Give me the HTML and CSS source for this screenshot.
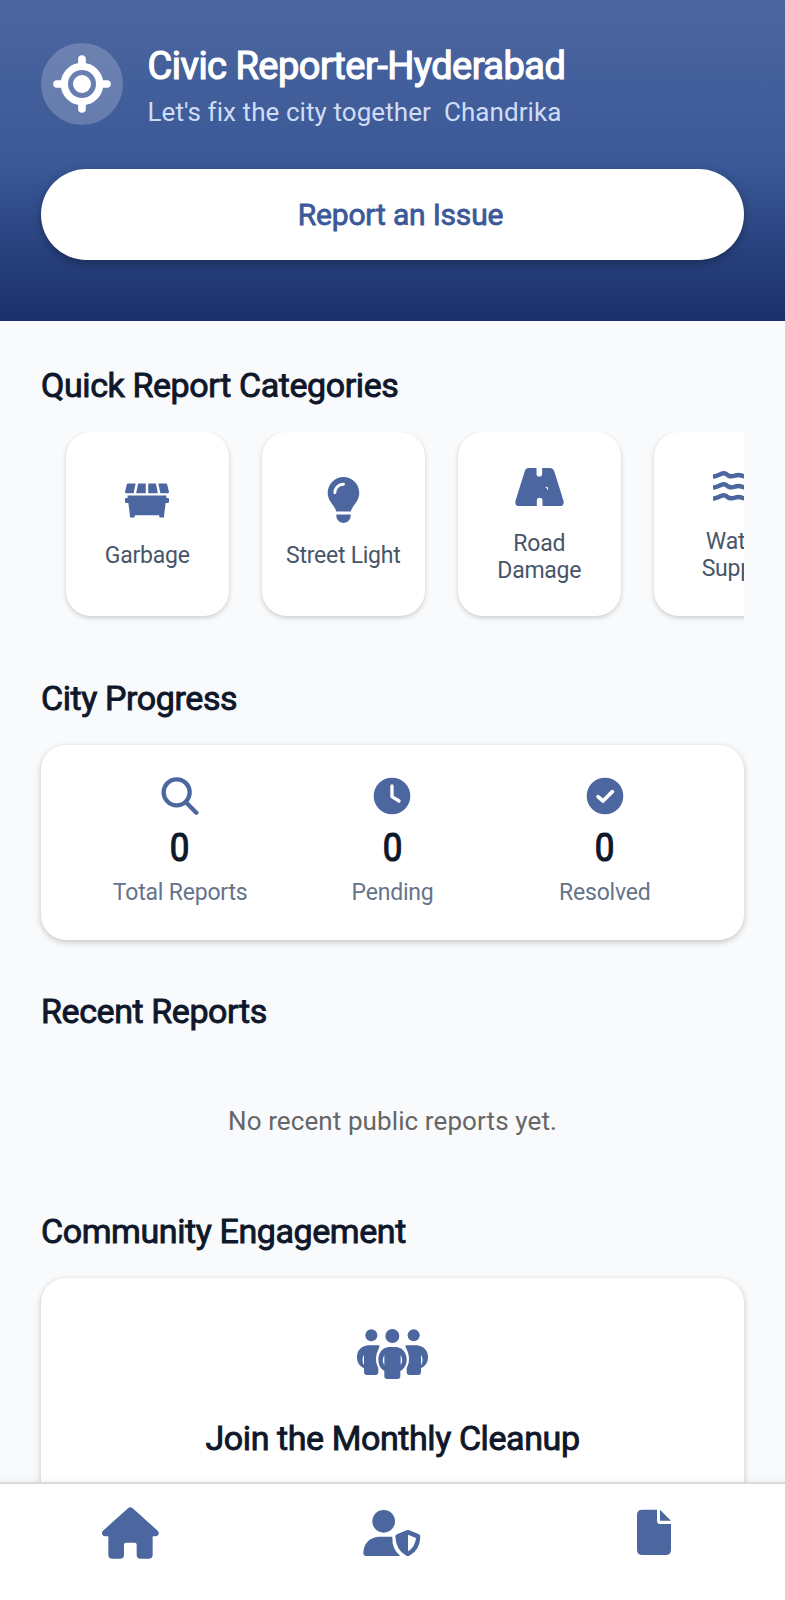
FILE: index.html
```html
<!DOCTYPE html>
<html lang="en">
<head>
<meta charset="utf-8">
<title>Civic Reporter</title>
<link rel="stylesheet" href="styles.css">
</head>
<body>
<div class="app">
  <header class="hero">
    <div class="brand">
      <div class="badge">
        <svg width="58" height="58" viewBox="0 0 174 174" fill="none" stroke="#fff">
          <circle cx="87" cy="87" r="53" stroke-width="22"/>
          <circle cx="87" cy="87" r="27" fill="#fff" stroke="none"/>
          <path d="M87 12v20M87 142v20M12 87h20M142 87h20" stroke-width="23" stroke-linecap="round"/>
        </svg>
      </div>
      <div>
        <h1 class="brand-title">Civic Reporter-Hyderabad</h1>
        <p class="brand-sub">Let's fix the city together&nbsp; Chandrika</p>
      </div>
    </div>
    <button class="cta">Report an Issue</button>
  </header>

  <main class="content">
    <h2 class="heading">Quick Report Categories</h2>
    <div class="categories">
      <div class="category">
        <div class="category-icon">
          <svg width="44" height="35" viewBox="0 32 576 448" fill="currentColor"><path d="M560 160c10.400 0 18-9.800 15.500-19.900l-24-96C549.700 37 543.300 32 536 32h-98.900l25.600 128H560zM272 32H171.500l-25.600 128H272V32zm132.500 0H304v128h126.100L404.500 32zM16 160h97.300l25.600-128H40c-7.300 0-13.700 5-15.500 12.100l-24 96C-2 150.200 5.600 160 16 160zm544 64h-20l4-32H32l4 32H16c-8.800 0-16 7.200-16 16v32c0 8.800 7.200 16 16 16h28l20 160v16c0 8.800 7.200 16 16 16h32c8.800 0 16-7.200 16-16v-16h320v16c0 8.800 7.200 16 16 16h32c8.800 0 16-7.200 16-16v-16l20-160h28c8.800 0 16-7.200 16-16v-32c0-8.800-7.200-16-16-16z"/></svg>
        </div>
        <span class="category-label">Garbage</span>
      </div>
      <div class="category">
        <div class="category-icon">
          <svg width="35" height="46" viewBox="0 0 384 512" fill="currentColor"><path d="M272 384c9.600-31.900 29.500-59.100 49.200-86.200 5.200-7.100 10.400-14.200 15.400-21.400 19.800-28.500 31.400-63 31.400-100.300C368 78.800 289.200 0 192 0S16 78.800 16 176c0 37.300 11.600 71.900 31.400 100.300 5 7.200 10.200 14.300 15.400 21.400 19.800 27.100 39.700 54.400 49.200 86.200H272zM192 512c44.200 0 80-35.800 80-80V416H112v16c0 44.200 35.800 80 80 80zM112 176c0 8.800-7.200 16-16 16s-16-7.200-16-16c0-61.900 50.100-112 112-112 8.800 0 16 7.200 16 16s-7.200 16-16 16c-44.200 0-80 35.800-80 80z"/></svg>
        </div>
        <span class="category-label">Street Light</span>
      </div>
      <div class="category category-road">
        <div class="category-icon">
          <svg width="49" height="38" viewBox="0 0 146 114"><path fill="currentColor" d="M40 0H64V17a8.500 8.500 0 0 0 17 0V0H104q9 0 13 9L145 98q3 16-11 16H82V98a8.500 8.500 0 0 0-17 0v16H12Q-2 114 1 98L29 9q3-9 11-9z"/><path fill="#fff" d="M90 57q9-3 9 6l-2 4q-1-7-7-10z"/></svg>
        </div>
        <span class="category-label">Road Damage</span>
      </div>
      <div class="category">
        <div class="category-icon">
          <svg width="44" height="31" viewBox="0 0 132 93" fill="none" stroke="currentColor" stroke-width="13.500" stroke-linejoin="round"><path d="M0 17q12-2 24-8t22 5q9 4 20 0t20 0q11 4 20 0t26 4M0 50q12-2 24-8t22 5q9 4 20 0t20 0q11 4 20 0t26 4M0 83q12-2 24-8t22 5q9 4 20 0t20 0q11 4 20 0t26 4"/></svg>
        </div>
        <span class="category-label">Water Supply</span>
      </div>
    </div>

    <h2 class="heading">City Progress</h2>
    <div class="card stats">
      <div class="stat">
        <svg width="38" height="38" viewBox="0 0 114 114" fill="none" stroke="currentColor" stroke-linecap="round"><circle cx="47" cy="46" r="39" stroke-width="13"/><path d="M77 78l29 29" stroke-width="13"/></svg>
        <strong class="stat-value">0</strong>
        <span class="stat-label">Total Reports</span>
      </div>
      <div class="stat">
        <svg width="38" height="38" viewBox="0 0 114 114" fill="none"><circle cx="57" cy="57" r="55" fill="currentColor"/><path d="M57 27v32l21 13" stroke="#fff" stroke-width="10" stroke-linecap="round" stroke-linejoin="round"/></svg>
        <strong class="stat-value">0</strong>
        <span class="stat-label">Pending</span>
      </div>
      <div class="stat">
        <svg width="38" height="38" viewBox="0 0 114 114" fill="none"><circle cx="57" cy="57" r="55" fill="currentColor"/><path d="M36 59l15 13 28-28" stroke="#fff" stroke-width="11" stroke-linecap="round" stroke-linejoin="round"/></svg>
        <strong class="stat-value">0</strong>
        <span class="stat-label">Resolved</span>
      </div>
    </div>

    <h2 class="heading">Recent Reports</h2>
    <p class="empty">No recent public reports yet.</p>

    <h2 class="heading">Community Engagement</h2>
    <div class="card event">
      <svg width="72" height="52" viewBox="51 55 216 156" fill="currentColor">
        <circle cx="94" cy="77" r="18"/><circle cx="221" cy="77" r="18"/><circle cx="157" cy="79" r="21"/>
        <g id="side"><path d="M84 107h30q7 0 4 5-18 34-3 62v13q0 9-9 9H81q-9 0-9-9v-11C58 169 51 158 51 143 51 122 64 109 84 107z"/><path d="M72 135q-9 14 0 32z" fill="#fff"/></g>
        <use href="#side" transform="matrix(-1 0 0 1 315 0)"/>
        <path d="M146 112h23C188 113 200 131 200 150c0 15-7 27-19 34v15q0 9-9 9h-30q-9 0-9-9v-15c-12-7-18-19-18-34 0-19 12-37 31-38z" stroke="#fff" stroke-width="12" paint-order="stroke"/>
        <path d="M133 136q-9 14 0 31zM182 136q9 14 0 31z" fill="#fff"/>
      </svg>
      <h3 class="event-title">Join the Monthly Cleanup</h3>
    </div>
  </main>

  <nav class="tabbar">
    <a class="tab"><svg width="58" height="52" viewBox="65 110 174 156" fill="currentColor"><path d="M143 114q7-6 14 0l75 67q6 6 2 12-3 5-9 5h-8v55q0 12-12 12h-24q-12 0-12-12v-30q0-6-6-6h-26q-6 0-6 6v30q0 12-12 12H96q-12 0-12-12v-55h-8q-7 0-10-5-3-7 2-12z"/></svg></a>
    <a class="tab"><svg width="58" height="48" viewBox="851 117 174 144"><circle cx="910" cy="154" r="34" fill="currentColor"/><path fill="currentColor" d="M895 200h41q-2 37 24 58H858q-9 0-9-9 2-44 46-49z"/><path fill="currentColor" d="M979 181q4-2 8 0l29 12q4 2 4 7-1 40-33 57-5 2-9 0-31-17-33-57 0-5 5-7z"/><path fill="#fff" d="M983 194l24 10q-3 28-24 40z"/></svg></a>
    <a class="tab"><svg width="36" height="48" viewBox="108 117 108 144" fill="currentColor"><path d="M127 119h44v33q0 10 10 10h32v77q0 16-16 16h-70q-16 0-16-16V135q0-16 16-16zM180 119l33 33h-33z"/></svg></a>
  </nav>
</div>
</body>
</html>
```
FILE: styles.css
```css
* { box-sizing: border-box; margin: 0; padding: 0; }

body {
  font-family: Roboto, "Noto Sans", sans-serif;
  background: #f8fafc;
  color: #0f172a;
}

.app {
  display: flex;
  flex-direction: column;
  height: 1600px;
  overflow: hidden;
}

.hero {
  flex: none;
  height: 321px;
  padding: 43px 41px 0;
  background: linear-gradient(#4c669f, #3b5998 50%, #192f6a);
}

.brand { display: flex; gap: 24.500px; height: 92px; }

.badge {
  display: flex;
  align-items: center;
  justify-content: center;
  width: 82px;
  height: 82px;
  border-radius: 50%;
  background: rgba(255, 255, 255, 0.2);
}

.brand-title {
  font-size: 38px;
  line-height: 46px;
  font-weight: 400;
  letter-spacing: -0.500px;
  color: #fff;
  white-space: nowrap;
  -webkit-text-stroke: 1.2px currentColor;
}

.brand-sub {
  font-size: 26px;
  line-height: 46px;
  letter-spacing: 0.070px;
  color: #cfdcf6;
  white-space: nowrap;
}

.cta {
  display: block;
  width: 100%;
  height: 91px;
  margin-top: 34px;
  padding: 0 0 0 16px;
  border: 0;
  border-radius: 46px;
  background: #fff;
  box-shadow: 0 3px 8px rgba(0, 0, 0, 0.3);
  color: #3b5998;
  font: 400 30px/40px Roboto, sans-serif;
  letter-spacing: -0.200px;
  -webkit-text-stroke: 0.8px currentColor;
}

.content {
  flex: 1;
  min-height: 0;
  padding: 44px 41px 0;
  overflow: hidden;
}

.heading, .event-title {
  font-size: 34px;
  line-height: 40px;
  font-weight: 400;
  letter-spacing: -0.410px;
  white-space: nowrap;
  -webkit-text-stroke: 0.9px currentColor;
}

.categories {
  display: flex;
  gap: 32.500px;
  height: 200px;
  margin: 27px 0 46px;
  padding-left: 24.500px;
  overflow: hidden;
}

.category {
  display: flex;
  flex: none;
  flex-direction: column;
  align-items: center;
  justify-content: center;
  gap: 17px;
  width: 163.500px;
  height: 183.500px;
  padding: 0 22px 3px;
  border-radius: 25px;
  background: #fff;
  box-shadow: 0 2px 5px rgba(0, 0, 0, 0.18);
}

.category-road { gap: 19px; padding-bottom: 1px; }

.category-icon {
  display: flex;
  align-items: center;
  justify-content: center;
  height: 49px;
  color: #4c669f;
}

.category-label {
  font-size: 23px;
  line-height: 27px;
  letter-spacing: -0.250px;
  color: #475569;
  text-align: center;
}

.card {
  border-radius: 25px;
  background: #fff;
  box-shadow: 0 2px 6px rgba(0, 0, 0, 0.22);
}

.stats {
  display: flex;
  height: 195px;
  margin: 27px 0 51px;
  padding: 32px 33px 0;
}

.stat {
  display: flex;
  flex: 1;
  flex-direction: column;
  align-items: center;
  color: #4c669f;
}

.stat-value {
  margin-top: 9px;
  font-size: 38px;
  line-height: 48px;
  font-weight: 400;
  color: #0f172a;
  transform: scaleX(0.92);
  -webkit-text-stroke: 1.2px currentColor;
}

.stat-label {
  margin-top: 7px;
  font-size: 23px;
  line-height: 28px;
  letter-spacing: -0.200px;
  color: #64748b;
}

.empty {
  padding: 70px 0;
  font-size: 26px;
  line-height: 40px;
  letter-spacing: 0.100px;
  text-align: center;
  color: #666;
}

.event {
  display: flex;
  flex-direction: column;
  align-items: center;
  height: 300px;
  margin-top: 27px;
  padding-top: 50px;
  color: #4c669f;
}

.event-title { margin-top: 38px; color: #0f172a; }

.tabbar {
  display: flex;
  flex: none;
  height: 118px;
  border-top: 2px solid #d9dadc;
  background: #fff;
  box-shadow: 0 -2px 6px rgba(0, 0, 0, 0.05);
  position: relative;
}

.tab {
  display: flex;
  flex: 1;
  align-items: flex-start;
  justify-content: center;
  padding-top: 23px;
  color: #4c669f;
}

.tab + .tab { padding-top: 25px; }

.tab svg { overflow: visible; }
```
